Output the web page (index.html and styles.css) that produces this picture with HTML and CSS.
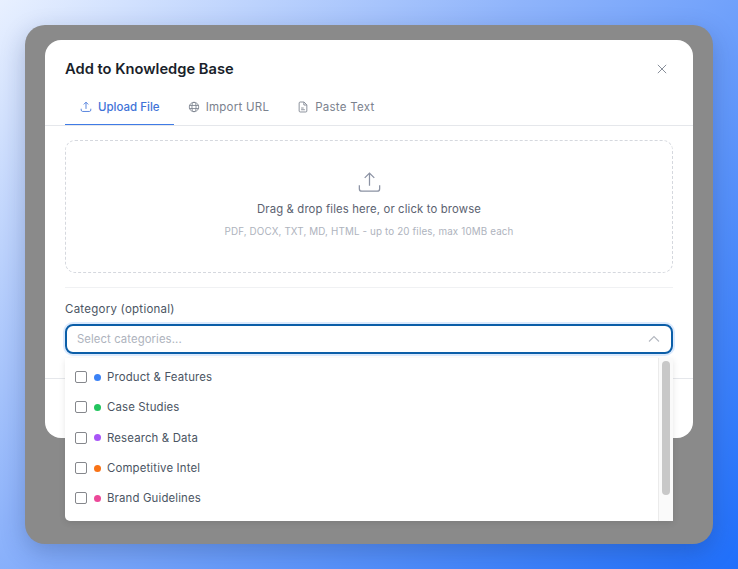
FILE: index.html
```html
<!DOCTYPE html>
<html lang="en">
<head>
    <meta charset="UTF-8">
    <meta name="viewport" content="width=device-width, initial-scale=1.0">
    <title>Add to Knowledge Base</title>
    <link rel="stylesheet" href="styles.css">
</head>
<body>
    <div class="backdrop">
        <div class="modal">
            <div class="modal-header">
                <h1>Add to Knowledge Base</h1>
                <svg class="close" viewBox="0 0 12 12"><path d="M1 1l10 10M11 1L1 11"/></svg>
            </div>
            <div class="tabs">
                <div class="tab active">
                    <svg class="tab-icon" viewBox="0 0 14 14"><path d="M7 9.2V1.6M4.4 4L7 1.4 9.6 4M1.4 9v1.6c0 .9.7 1.6 1.6 1.6h8c.9 0 1.6-.7 1.6-1.6V9"/></svg>
                    Upload File
                </div>
                <div class="tab">
                    <svg class="tab-icon" viewBox="0 0 14 14"><circle cx="7" cy="7" r="5.5"/><ellipse cx="7" cy="7" rx="2.4" ry="5.5"/><path d="M1.5 5.2h11M1.5 8.8h11"/></svg>
                    Import URL
                </div>
                <div class="tab">
                    <svg class="tab-icon" viewBox="0 0 14 14"><path d="M8.2 1.2H3.6c-.6 0-1.1.5-1.1 1.1v9.4c0 .6.5 1.1 1.1 1.1h6.8c.6 0 1.1-.5 1.1-1.1V4.5L8.2 1.2zM8 1.4v3.3h3.3M4.8 8.2h3M4.8 10.2h4.4"/></svg>
                    Paste Text
                </div>
            </div>
            <div class="modal-body">
                <div class="dropzone">
                    <svg class="drop-icon" viewBox="0 0 24 24"><path d="M12 15.5V2.5M7 7.2L12 2.2l5 5M1.4 14.8v3.6c0 1.5 1.2 2.7 2.7 2.7h15.8c1.5 0 2.7-1.2 2.7-2.7v-3.6"/></svg>
                    <p class="drop-title">Drag &amp; drop files here, or click to browse</p>
                    <p class="drop-hint">PDF, DOCX, TXT, MD, HTML - up to 20 files, max 10MB each</p>
                </div>
                <div class="field">
                    <label class="field-label">Category (optional)</label>
                    <div class="select">
                        <span>Select categories...</span>
                        <svg class="chevron" viewBox="0 0 12 8"><path d="M1 6.5L6 1.5l5 5"/></svg>
                    </div>
                </div>
            </div>
            <div class="modal-footer"></div>
        </div>
        <div class="dropdown">
            <div class="options">
                <div class="option"><span class="check"></span><span class="dot blue"></span>Product &amp; Features</div>
                <div class="option"><span class="check"></span><span class="dot green"></span>Case Studies</div>
                <div class="option"><span class="check"></span><span class="dot purple"></span>Research &amp; Data</div>
                <div class="option"><span class="check"></span><span class="dot orange"></span>Competitive Intel</div>
                <div class="option"><span class="check"></span><span class="dot pink"></span>Brand Guidelines</div>
            </div>
            <div class="scrollbar"><div class="thumb"></div></div>
        </div>
    </div>
</body>
</html>
```

FILE: styles.css
```css
* {
    box-sizing: border-box;
}
body {
    margin: 0;
    height: 569px;
    padding: 25px;
    overflow: hidden;
    background: linear-gradient(135deg, #e8f0ff 0%, #8fb4fb 40%, #1f6ffb 100%);
    font-family: Inter, "Liberation Sans", sans-serif;
    color: #4b5563;
}
.backdrop {
    position: relative;
    width: 688px;
    height: 519px;
    padding: 15px 20px;
    background: #8a8a8a;
    border-radius: 20px;
    box-shadow: 0 8px 24px rgba(20, 40, 90, 0.25);
}
.modal {
    height: 398px;
    background: white;
    border-radius: 16px;
}
.modal-header {
    height: 52px;
    padding: 5px 26px 0 20px;
    display: flex;
    justify-content: space-between;
    align-items: center;
}
.modal-header h1 {
    margin: 0;
    font-size: 14.7px;
    font-weight: 600;
    color: #1a1f2b;
}
.close {
    width: 10px;
    height: 10px;
    fill: none;
    stroke: #7d8490;
    stroke-width: 1.1;
}
.tabs {
    height: 34px;
    padding: 0 20px;
    display: flex;
    border-bottom: 1px solid #e5e7eb;
}
.tab {
    height: 33px;
    padding: 0 14px 4px;
    display: flex;
    align-items: center;
    gap: 6px;
    font-size: 11.5px;
    letter-spacing: 0.25px;
    color: #7b828e;
}
.tab.active {
    padding: 0 14px 3px 15px;
    font-weight: 500;
    letter-spacing: 0;
    color: #3f73d8;
    border-bottom: 1px solid #3f7be6;
}
.tab-icon {
    width: 12px;
    height: 12px;
    fill: none;
    stroke: currentColor;
    stroke-width: 1;
}
.modal-body {
    padding: 14px 20px 0;
}
.dropzone {
    height: 133px;
    border: 1px dashed #d5d8de;
    border-radius: 10px;
    display: flex;
    flex-direction: column;
    align-items: center;
    padding-top: 30px;
}
.drop-icon {
    width: 23px;
    height: 23px;
    fill: none;
    stroke: #8b92a3;
    stroke-width: 1.3;
}
.drop-title {
    margin: 8px 0 0;
    font-size: 11.3px;
    line-height: 15px;
    letter-spacing: 0.15px;
    color: #5b6270;
}
.drop-hint {
    margin: 8px 0 0;
    font-size: 9.8px;
    line-height: 14px;
    letter-spacing: 0.15px;
    color: #aeb3bd;
}
.field {
    margin-top: 14px;
    padding-top: 14px;
    border-top: 1px solid #f0f1f3;
}
.field-label {
    display: block;
    font-size: 11.5px;
    line-height: 14px;
    letter-spacing: 0.25px;
    color: #4b5563;
}
.select {
    margin-top: 8px;
    height: 30px;
    padding: 0 11px 0 10px;
    display: flex;
    justify-content: space-between;
    align-items: center;
    border: 2px solid #0b5ea8;
    border-radius: 8px;
    box-shadow: 0 0 0 2px #dbeafe;
    font-size: 11.3px;
    letter-spacing: 0.1px;
    color: #aeb3bd;
}
.chevron {
    width: 12px;
    height: 8px;
    fill: none;
    stroke: #b4b8c0;
    stroke-width: 1.1;
}
.modal-footer {
    margin-top: 24px;
    border-top: 1px solid #e5e7eb;
}
/* open list lies over the modal */
.dropdown {
    position: absolute;
    left: 40px;
    top: 333px;
    width: 608px;
    height: 163px;
    display: flex;
    background: white;
    border-radius: 0 0 0 5px;
    box-shadow: 0 2px 6px rgba(0, 0, 0, 0.1);
}
.options {
    flex: 1;
    padding-top: 4px;
}
.option {
    height: 30.3px;
    padding-left: 10px;
    display: flex;
    align-items: center;
    font-size: 11.4px;
    letter-spacing: 0.15px;
    color: #4b5563;
}
.check {
    width: 12px;
    height: 12px;
    margin-right: 7px;
    border: 1px solid #85878c;
    border-radius: 2px;
}
.dot {
    width: 7px;
    height: 7px;
    margin-right: 6px;
    border-radius: 50%;
}
.blue { background: #3b82f6; }
.green { background: #22c55e; }
.purple { background: #a855f7; }
.orange { background: #f97316; }
.pink { background: #ec4899; }
.scrollbar {
    width: 15px;
    padding: 3px 3px 0 3px;
    background: #fafafa;
    border-left: 1px solid #ebebeb;
}
.thumb {
    height: 134px;
    background: #c8c8c8;
    border-radius: 4px;
}
```
